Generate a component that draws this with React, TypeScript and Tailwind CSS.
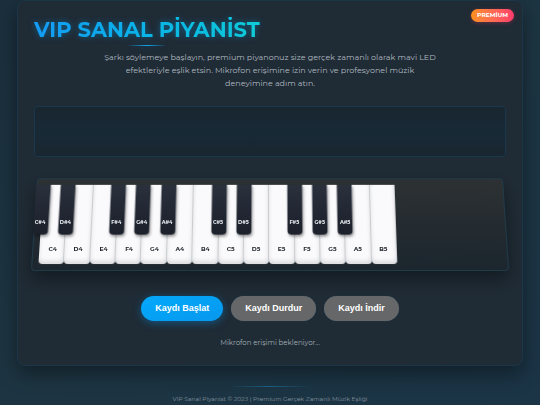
import { useState } from "react";

const WHITE_KEYS = [
  "C4", "D4", "E4", "F4", "G4", "A4", "B4",
  "C5", "D5", "E5", "F5", "G5", "A5", "B5",
];

// slot = index of the white key whose left edge the black key sits on
const BLACK_KEYS = [
  { note: "C#4", slot: 0 },
  { note: "D#4", slot: 1 },
  { note: "F#4", slot: 3 },
  { note: "G#4", slot: 4 },
  { note: "A#4", slot: 5 },
  { note: "C#5", slot: 7 },
  { note: "D#5", slot: 8 },
  { note: "F#5", slot: 10 },
  { note: "G#5", slot: 11 },
  { note: "A#5", slot: 12 },
];

const slotLeft = (slot: number) => `${(slot / WHITE_KEYS.length) * 100}%`;

const Piano = () => {
  const [active, setActive] = useState("");

  return (
    <div className="relative mt-[21px] h-[92px]">
      {/* tilted board, the labels stay flat on top of it */}
      <div
        aria-hidden="true"
        className="absolute inset-x-0 -top-[2px] h-24 rounded border border-[#203b49] bg-linear-to-b from-[#2d3133] to-[#1c262e] pt-[6px] pl-[6px] shadow-[0_8px_18px_rgba(0,0,0,0.4)] [transform:perspective(950px)_rotateX(15deg)]"
      >
        <div className="relative grid h-[82px] w-[355px] grid-cols-14">
          {WHITE_KEYS.map((note) => (
            <div
              key={note}
              className={`rounded-b border-r border-[#c9ccd1] shadow-[inset_0_-3px_4px_rgba(0,0,0,0.12)] ${
                active === note ? "bg-[#8fd4ff]" : "bg-[#fafafc]"
              }`}
            />
          ))}
          {BLACK_KEYS.map(({ note, slot }) => (
            <div
              key={note}
              style={{ left: slotLeft(slot) }}
              className={`absolute top-0 h-[52px] w-[15px] -translate-x-1/2 rounded-b shadow-[1px_2px_3px_rgba(0,0,0,0.4)] ${
                active === note ? "bg-[#0080d0]" : "bg-linear-to-b from-[#2a303c] to-[#1b202b]"
              }`}
            />
          ))}
        </div>
      </div>

      <div className="relative ml-[6px] grid h-[85px] w-[356px] grid-cols-14 pt-[6px] font-bold">
        {WHITE_KEYS.map((note) => (
          <button
            key={note}
            type="button"
            onClick={() => setActive(note)}
            className="flex items-end justify-center pb-[10px] text-[6px] leading-[8px] text-[#22272f]"
          >
            {note}
          </button>
        ))}
        {BLACK_KEYS.map(({ note, slot }) => (
          <button
            key={note}
            type="button"
            onClick={() => setActive(note)}
            style={{ left: slotLeft(slot) }}
            className="absolute top-[6px] flex h-[50px] w-4 -translate-x-1/2 items-end justify-center pb-[8px] text-[5px] leading-[8px] text-[#eef2f6]"
          >
            {note}
          </button>
        ))}
      </div>
    </div>
  );
};

export default function App() {
  const [recording, setRecording] = useState(false);

  return (
    <div className="min-h-screen bg-linear-to-br from-[#1b2f3d] via-[#1d3542] to-[#1b3446] px-[17px] font-['Montserrat','Inter',sans-serif]">
      <main className="relative rounded-lg border border-[#1d3647] bg-[#1f2b35] px-4 pt-[16px] pb-[16px] shadow-[0_8px_20px_rgba(0,0,0,0.4)]">
        <span className="absolute top-2 right-2 rounded-full bg-linear-to-r from-[#ff9016] to-[#ff3a6c] px-[6px] text-[6px] leading-[13px] font-bold text-white shadow-[0_1px_4px_rgba(255,60,100,0.3)]">
          PREMİUM
        </span>

        <header>
          <h1 className="relative w-fit bg-linear-to-r from-[#159bf5] to-[#10cbd8] bg-clip-text text-[21px] leading-[26px] font-bold text-transparent drop-shadow-[0_0_3px_rgba(0,160,240,0.45)] after:absolute after:-bottom-[3px] after:left-1/2 after:h-px after:w-10 after:-translate-x-1/2 after:bg-linear-to-r after:from-transparent after:via-[#12a5f0] after:to-transparent">
            VIP SANAL PİYANİST
          </h1>
          <p className="mx-auto mt-[8px] max-w-[336px] text-center text-[8px] leading-[13px] text-[#b0bac0]">
            Şarkı söylemeye başlayın, premium piyanonuz size gerçek zamanlı olarak mavi LED
            efektleriyle eşlik etsin. Mikrofon erişimine izin verin ve profesyonel müzik
            deneyimine adım atın.
          </p>
        </header>

        <div className="mt-[16px] h-[51px] rounded border border-[#1a384b] bg-linear-to-b from-[#19262f] via-[#182a37] to-[#19262f]" />

        <Piano />

        <div className="mt-[26px] flex flex-wrap justify-center gap-2 font-['Liberation_Sans',Arial,sans-serif] text-[9px] leading-[25px] font-bold text-white">
          <button
            type="button"
            onClick={() => setRecording(true)}
            className="rounded-full bg-linear-to-br from-[#03a9fb] to-[#0798ee] px-[14px] shadow-[0_2px_8px_rgba(0,150,240,0.4)]"
          >
            Kaydı Başlat
          </button>
          <button
            type="button"
            disabled={!recording}
            onClick={() => setRecording(false)}
            className="rounded-full bg-[#666768] px-[14px] shadow-[0_0_1px_rgba(50,90,115,0.8)]"
          >
            Kaydı Durdur
          </button>
          <button
            type="button"
            disabled
            className="rounded-full bg-[#666768] px-[14px] shadow-[0_0_1px_rgba(50,90,115,0.8)]"
          >
            Kaydı İndir
          </button>
        </div>

        <p className="mt-[15px] text-center text-[7px] leading-[13px] text-[#a3afb6]">
          Mikrofon erişimi bekleniyor...
        </p>
      </main>

      <footer className="mt-5 text-center text-[6px] leading-[10px] text-[#8696a0]">
        <div className="mx-auto mb-[7px] h-px w-[84px] bg-linear-to-r from-transparent via-[#1b6288] to-transparent" />
        VIP Sanal Piyanist © 2023 | Premium Gerçek Zamanlı Müzik Eşliği
      </footer>
    </div>
  );
}
